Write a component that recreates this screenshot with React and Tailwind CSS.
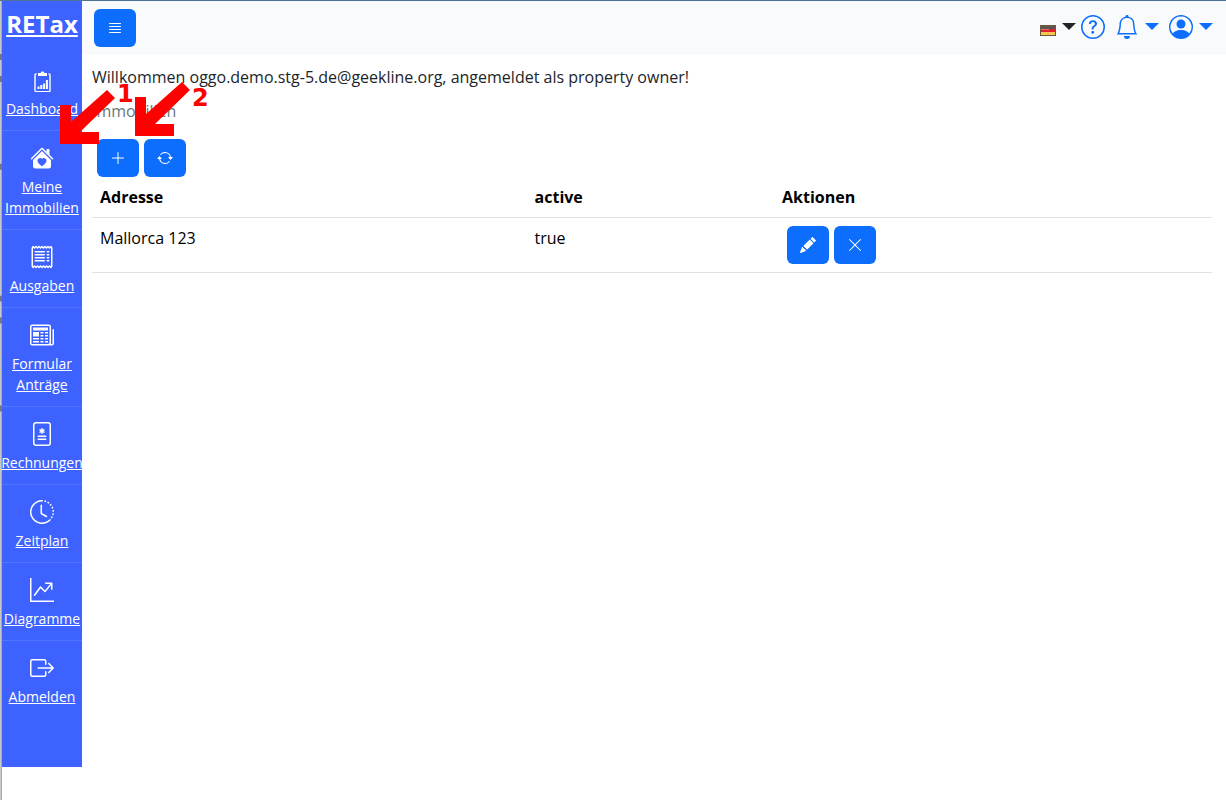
import {
  BsArrowRepeat,
  BsBell,
  BsBoxArrowRight,
  BsClockHistory,
  BsFileMedical,
  BsGraphUpArrow,
  BsHouseHeartFill,
  BsJustify,
  BsNewspaper,
  BsPencilFill,
  BsPersonCircle,
  BsPlusLg,
  BsQuestionCircle,
  BsReceipt,
  BsXLg,
} from 'react-icons/bs';

const ClipboardIcon = ({ className }) => (
  <svg viewBox="0 0 24 24" className={className} fill="none" stroke="currentColor">
    <path d="M6.5 6H5.8A.8.8 0 0 0 5 6.8v16a.8.8 0 0 0 .8.8h13.4a.8.8 0 0 0 .8-.8v-16a.8.8 0 0 0-.8-.8h-.7" strokeWidth="1.4" />
    <path d="M8 5h2.5l1-1.5h2l1 1.5H17v3H8z" fill="currentColor" stroke="none" />
    <path d="M8.5 21v-2.500M11.300 21v-4M14.100 21v-5.500M16.900 21V12" strokeWidth="2" />
  </svg>
);

const navItems = [
  { label: 'Dashboard', icon: ClipboardIcon },
  { label: 'Meine Immobilien', icon: BsHouseHeartFill },
  { label: 'Ausgaben', icon: BsReceipt },
  { label: 'Formular Anträge', icon: BsNewspaper },
  { label: 'Rechnungen', icon: BsFileMedical },
  { label: 'Zeitplan', icon: BsClockHistory },
  { label: 'Diagramme', icon: BsGraphUpArrow },
  { label: 'Abmelden', icon: BsBoxArrowRight },
];

const properties = [{ address: 'Mallorca 123', active: true }];

const IconButton = ({ icon: Icon, label }) => (
  <button
    type="button"
    aria-label={label}
    className="flex h-[38px] w-[42px] items-center justify-center rounded-md bg-[#0d6efd] text-white hover:bg-[#0b5ed7]"
  >
    <Icon className="size-4" />
  </button>
);

const Caret = () => (
  <svg viewBox="0 0 14 7" className="mb-0.5 h-[7px] w-[14px]" fill="currentColor">
    <path d="M0 0h14L7 7z" />
  </svg>
);

const Flag = () => (
  <svg viewBox="0 0 16 11" className="mt-1.5 h-[11px] w-4">
    <path d="M0 0h16v11H0z" fill="#6b5a3a" />
    <path d="M1 1h14v3H1z" fill="#5c5654" />
    <path d="M1 4h14v3H1z" fill="#e0202a" />
    <path d="M1 4h8v1H1z" fill="#ee6a6a" />
    <path d="M1 7h14v3H1z" fill="#f3c553" />
  </svg>
);

const Sidebar = () => (
  <nav className="flex h-[766px] w-20 shrink-0 flex-col bg-[#3d62ff] text-white">
    <a href="#" className="mb-1.5 flex h-[46px] items-center justify-center text-2xl font-bold underline">
      RETax
    </a>
    {navItems.map(({ label, icon: Icon }) => (
      <a
        key={label}
        href="#"
        className="flex flex-col items-center gap-1.5 border-b border-[#4f74ff] pt-[15px] pb-[11px] text-center text-sm leading-[21px] underline last:border-transparent"
      >
        <Icon className="size-6" />
        <span>{label}</span>
      </a>
    ))}
  </nav>
);

const Topbar = () => (
  <header className="flex h-[54px] items-center justify-between bg-[#f8fafc] pr-[13px] pl-3">
    <IconButton icon={BsJustify} label="Menü" />
    <div className="flex items-center pb-0.5 text-[#0d6efd]">
      <button type="button" aria-label="Sprache" className="flex items-center gap-1.5 text-[#212529]">
        <Flag />
        <Caret />
      </button>
      <button type="button" aria-label="Hilfe" className="ml-[5px]">
        <BsQuestionCircle className="size-6" />
      </button>
      <button type="button" aria-label="Benachrichtigungen" className="ml-2.5 flex items-center gap-1.5">
        <BsBell className="size-6" />
        <Caret />
      </button>
      <button type="button" aria-label="Konto" className="ml-2.5 flex items-center gap-1.5">
        <BsPersonCircle className="size-6" />
        <Caret />
      </button>
    </div>
  </header>
);

const PropertyTable = () => (
  <table className="w-full table-fixed border-collapse text-left text-black">
    <thead>
      <tr className="border-b border-[#dee2e6]">
        <th className="w-[38.8%] p-2 font-bold">Adresse</th>
        <th className="w-[22.1%] p-2 font-bold">active</th>
        <th className="p-2 font-bold">Aktionen</th>
      </tr>
    </thead>
    <tbody>
      {properties.map(({ address, active }) => (
        <tr key={address} className="border-b border-[#dee2e6] align-top">
          <td className="p-2">{address}</td>
          <td className="p-2">{String(active)}</td>
          <td className="p-2">
            <div className="flex gap-[5px] pl-[5px]">
              <IconButton icon={BsPencilFill} label="Bearbeiten" />
              <IconButton icon={BsXLg} label="Löschen" />
            </div>
          </td>
        </tr>
      ))}
    </tbody>
  </table>
);

// Window edge with slivers of the page behind it
const WindowEdge = () => (
  <svg viewBox="0 0 2 800" className="h-[799px] w-0.5 shrink-0" preserveAspectRatio="none">
    <path d="M0 0h2v800H0z" fill="#c9c9c4" />
    <path d="M1 0h1v800H1z" fill="#a9a9a6" />
    <path d="M0 53h2v6H0zM0 75h2v6H0zM0 163h2v6H0zM0 295h2v6H0zM0 317h2v6H0zM0 405h2v6H0z" fill="#77777a" />
  </svg>
);

// Red walkthrough arrow with its step number
const Step = ({ number, className, arrowClass, numberClass }) => (
  <div className={`pointer-events-none absolute flex items-start text-[#ff0000] ${className}`}>
    <svg viewBox="0 0 55 55" className={`size-[55px] ${arrowClass}`} fill="currentColor">
      <path d="M0 15h11v17L47 0l8 8-35 34h19v12H0z" />
    </svg>
    <span className={`ml-0.5 font-['DejaVu_Sans'] text-2xl leading-6 font-bold ${numberClass}`}>{number}</span>
  </div>
);

export default function App() {
  return (
    <div className="relative flex min-h-screen border-t border-[#4f7396] bg-white font-['Open_Sans',sans-serif] text-base text-[#212529]">
      <WindowEdge />
      <Sidebar />
      <div className="min-w-0 flex-1">
        <Topbar />
        <main className="pt-2.5 pr-3.5 pl-2.5">
          <p>Willkommen oggo.demo.stg-5.de@geekline.org, angemeldet als property owner!</p>
          <p className="mt-2.5 text-[#6c757d]">Immobilien</p>
          <div className="mt-4 flex gap-[5px] pl-[5px]">
            <IconButton icon={BsPlusLg} label="Hinzufügen" />
            <IconButton icon={BsArrowRepeat} label="Aktualisieren" />
          </div>
          <PropertyTable />
        </main>
      </div>
      <Step number={1} className="top-[81px] left-[60px]" arrowClass="mt-2" numberClass="mt-0" />
      <Step number={2} className="top-[81px] left-[135px]" arrowClass="mt-0" numberClass="mt-1" />
    </div>
  );
}
